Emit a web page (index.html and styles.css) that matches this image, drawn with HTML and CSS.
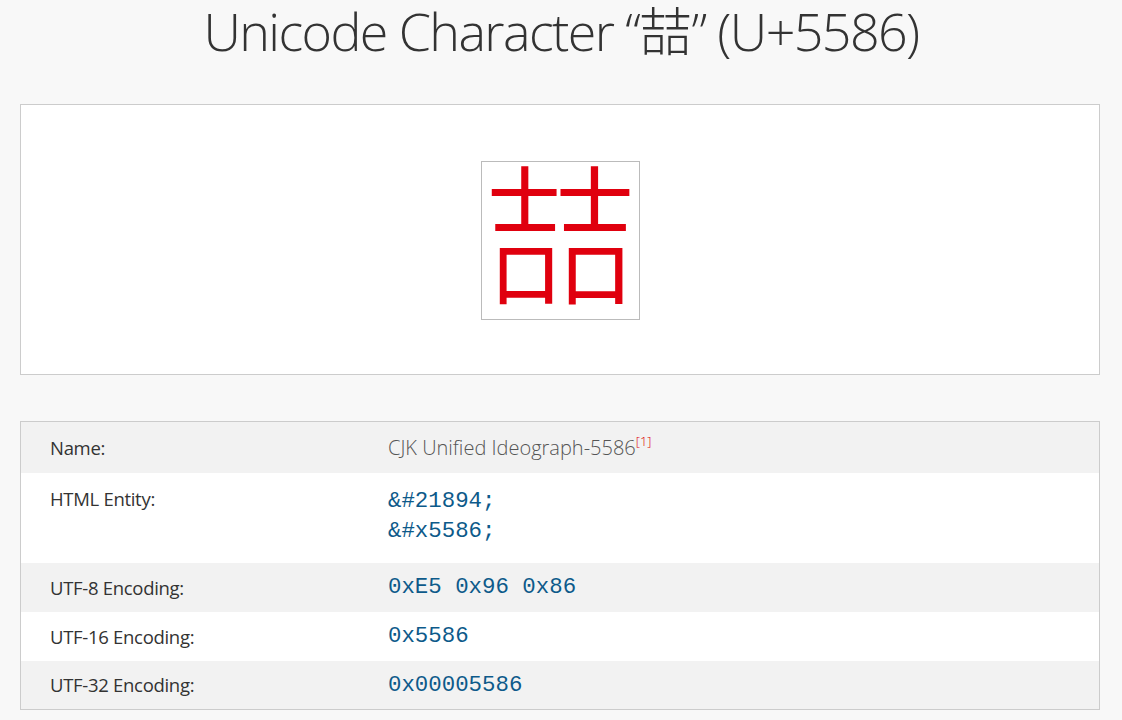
FILE: index.html
```html
<!DOCTYPE html>
<html lang="en">
<head>
<meta charset="utf-8">
<title>Unicode Character “喆” (U+5586)</title>
<link rel="stylesheet" href="styles.css">
</head>
<body>
<h1 class="title">Unicode Character “<span class="title-cjk">喆</span>” (U+5586)</h1>
<main class="page">
  <section class="char-card">
    <div class="char-box"><span class="char-glyph">喆</span></div>
  </section>
  <table class="info">
    <tbody>
      <tr class="row alt first">
        <th class="label">Name:</th>
        <td class="value name">CJK Unified Ideograph-5586<sup class="ref">[1]</sup></td>
      </tr>
      <tr class="row tall">
        <th class="label">HTML Entity:</th>
        <td class="value code">&amp;#21894;<br>&amp;#x5586;</td>
      </tr>
      <tr class="row alt">
        <th class="label">UTF-8 Encoding:</th>
        <td class="value code">0xE5 0x96 0x86</td>
      </tr>
      <tr class="row">
        <th class="label">UTF-16 Encoding:</th>
        <td class="value code">0x5586</td>
      </tr>
      <tr class="row alt">
        <th class="label">UTF-32 Encoding:</th>
        <td class="value code">0x00005586</td>
      </tr>
    </tbody>
  </table>
</main>
</body>
</html>
```
FILE: styles.css
```css
html, body {
  margin: 0;
  padding: 0;
}
body {
  background: #f8f8f8;
  font-family: "Open Sans", "Noto Sans CJK SC", sans-serif;
  color: #333;
}
.title {
  margin: 0;
  padding-top: 0;
  height: 102px;
  box-sizing: border-box;
  text-align: center;
  font-family: "Open Sans", "Noto Sans CJK SC", sans-serif;
  font-weight: 300;
  font-size: 52px;
  line-height: 58px;
  color: #333;
  letter-spacing: -1.6px;
}
.title-cjk {
  font-family: "Noto Sans CJK SC", sans-serif;
  font-weight: 300;
  letter-spacing: 0;
}
.page {
  margin: 0 22px 0 20px;
}
.char-card {
  background: #fff;
  border: 1px solid #ccc;
  height: 271px;
  box-sizing: border-box;
  display: flex;
  justify-content: center;
  align-items: center;
  margin-top: 2px;
}
.char-box {
  width: 159px;
  height: 159px;
  box-sizing: border-box;
  border: 1px solid #bbb;
  display: flex;
  justify-content: center;
  align-items: flex-start;
  margin-left: 1px;
  margin-top: 2px;
  overflow: hidden;
}
.char-glyph {
  font-family: "Noto Sans CJK SC", sans-serif;
  font-weight: 300;
  font-size: 151px;
  line-height: 151px;
  color: #e0000e;
  margin-top: -10px;
}
.info {
  margin-top: 46px;
  width: 100%;
  border: 1px solid #ccc;
  border-collapse: collapse;
  background: #fff;
}
.row {
  height: 49px;
}
.row.first {
  height: 51px;
}
.row.alt {
  background: #f2f2f2;
}
.row.tall {
  height: 90px;
}
.label {
  width: 338px;
  padding: 0 0 0 29px;
  text-align: left;
  font-weight: 400;
  font-size: 18.5px;
  letter-spacing: -0.3px;
  color: #333;
  vertical-align: middle;
}
.row.tall .label,
.row.tall .value {
  vertical-align: top;
  padding-top: 13px;
}
.value {
  padding: 0;
  vertical-align: middle;
}
.name {
  font-size: 20px;
  font-weight: 300;
  letter-spacing: 0;
  color: #555;
}
.ref {
  color: #d00;
  font-size: 13px;
  vertical-align: 9px;
  line-height: 0;
}
.code {
  font-family: "Liberation Mono", monospace;
  font-size: 22.4px;
  line-height: 30px;
  color: #0d5a8a;
}
```
